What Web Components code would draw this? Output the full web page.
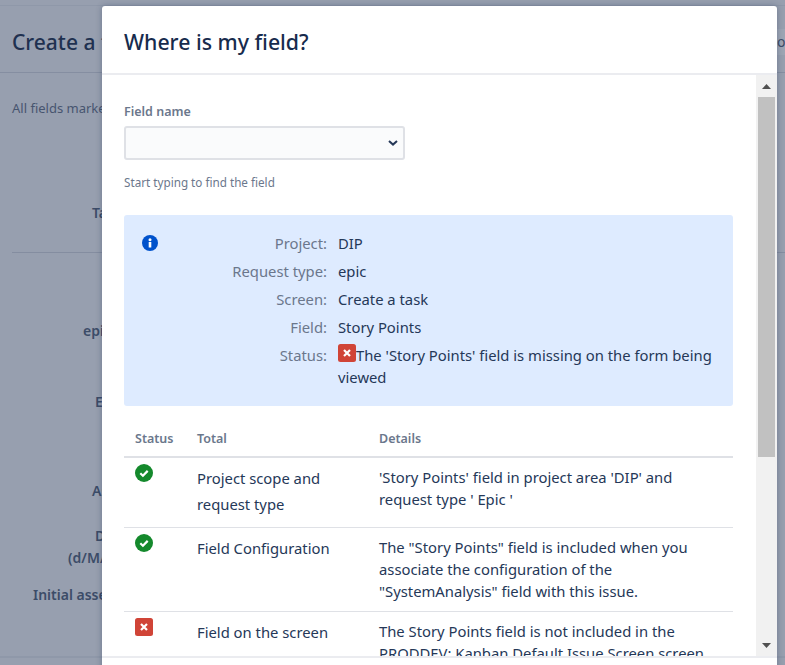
<!DOCTYPE html>
<html lang="en">
<head>
<meta charset="utf-8">
<title>Where is my field?</title>
<style>
  html, body { margin: 0; height: 665px; overflow: hidden; }
  body { font-family: "Noto Sans", "Open Sans", "Liberation Sans", sans-serif; color: #172b4d; }
</style>
</head>
<body>
<form-page>
  <field-modal heading="Where is my field?">
    <field-picker label="Field name" hint="Start typing to find the field"></field-picker>
    <info-panel>
      <info-row label="Project:">DIP</info-row>
      <info-row label="Request type:">epic</info-row>
      <info-row label="Screen:">Create a task</info-row>
      <info-row label="Field:">Story Points</info-row>
      <info-row label="Status:"><status-icon type="error"></status-icon>The 'Story Points' field is missing on the form being viewed</info-row>
    </info-panel>
    <check-table>
      <check-row type="ok" total="Project scope and request type">'Story Points' field in project area 'DIP' and request type ' Epic '</check-row>
      <check-row type="ok" total="Field Configuration">The "Story Points" field is included when you associate the configuration of the "SystemAnalysis" field with this issue.</check-row>
      <check-row type="error" total="Field on the screen">The Story Points field is not included in the PRODDEV: Kanban Default Issue Screen screen.</check-row>
    </check-table>
  </field-modal>
</form-page>

<script>
/* the form behind the dialog, dimmed by the backdrop */
class FormPage extends HTMLElement {
  constructor() {
    super();
    this.attachShadow({ mode: "open" });
    const labels = [
      ["Task", 92, 203], ["epic name", 83, 321], ["Epic", 95, 392], ["Assignee", 92, 481],
      ["Due date", 95, 526], ["(d/M/yy)", 68, 548], ["Initial assessment", 33, 585],
    ];
    this.shadowRoot.innerHTML = /* html */ `
    <style>
      :host { display: block; position: relative; width: 785px; height: 665px; overflow: hidden; background: #979faf; }
      .head { height: 68px; margin-top: 5px; border-top: 1px solid #8f98a9; border-bottom: 1px solid #858ea1; display: flex; justify-content: space-between; align-items: center; padding-left: 12px; padding-top: 6px; box-sizing: border-box; }
      h1 { margin: 0; font-size: 21px; font-weight: 500; color: #1f3150; white-space: nowrap; }
      .other { background: #9da5b4; color: #3c4c68; font-size: 14px; height: 26px; line-height: 26px; width: 8px; overflow: hidden; }
      .note { position: absolute; left: 12px; top: 99px; font-size: 13px; color: #47556f; white-space: nowrap; }
      .labels b { position: absolute; font-size: 14px; font-weight: 600; color: #3c4c68; white-space: nowrap; }
      .rule { position: absolute; left: 12px; right: 0; top: 252px; border-top: 1px solid #848da0; }
      .foot { position: absolute; left: 0; right: 0; top: 656px; border-top: 2px solid #8f98a9; }
    </style>
    <div class="head"><h1>Create a task</h1><span class="other">or</span></div>
    <div class="note">All fields marked with an asterisk are required</div>
    <div class="labels">${labels.map(([t, x, y]) => `<b style="left:${x}px;top:${y}px">${t}</b>`).join("")}</div>
    <div class="rule"></div>
    <div class="foot"></div>
    <slot></slot>`;
  }
}

class FieldModal extends HTMLElement {
  constructor() {
    super();
    this.attachShadow({ mode: "open" });
    this.shadowRoot.innerHTML = /* html */ `
    <style>
      :host { display: flex; flex-direction: column; position: absolute; left: 102px; top: 6px; width: 675px; height: 670px; background: #fff; border-radius: 3px 3px 0 0; box-shadow: 0 0 6px rgba(9,30,66,.3); }
      header { flex: none; box-sizing: border-box; height: 69px; display: flex; align-items: center; padding: 4px 0 0 22px; border-bottom: 2px solid #ebecf0; }
      h2 { margin: 0; font-size: 21.3px; font-weight: 500; color: #172b4d; }
      .middle { flex: none; display: flex; height: 581px; }
      .scroll { flex: 1; min-width: 0; overflow: hidden; padding: 29px 23px 0 22px; }
      .bar { flex: none; width: 21px; background: #f1f1f1; display: flex; flex-direction: column; align-items: center; }
      .arrow { flex: none; height: 22px; display: flex; align-items: center; justify-content: center; }
      .thumb { flex: none; width: 17px; height: 360px; background: #c1c1c1; }
      .gap { flex: 1; }
      footer { flex: none; height: 20px; border-top: 2px solid #ebecf0; }
    </style>
    <header><h2></h2></header>
    <div class="middle">
      <div class="scroll"><slot></slot></div>
      <div class="bar">
        <div class="arrow"><svg width="9" height="5" viewBox="0 0 9 5"><path d="M4.500 0 9 5H0z" fill="#505050"/></svg></div>
        <div class="thumb"></div>
        <div class="gap"></div>
        <div class="arrow"><svg width="9" height="5" viewBox="0 0 9 5"><path d="M0 0h9L4.500 5z" fill="#505050"/></svg></div>
      </div>
    </div>
    <footer></footer>`;
    this.shadowRoot.querySelector("h2").textContent = this.getAttribute("heading");
  }
}

class FieldPicker extends HTMLElement {
  constructor() {
    super();
    this.attachShadow({ mode: "open" });
    this.shadowRoot.innerHTML = /* html */ `
    <style>
      :host { display: block; }
      label { display: block; font-size: 12.5px; font-weight: 600; line-height: 16px; color: #6b778c; margin-bottom: 6px; }
      .box { box-sizing: border-box; width: 281px; height: 34px; background: #fafbfc; border: 2px solid #dfe1e6; border-radius: 3px; display: flex; align-items: center; justify-content: flex-end; padding-right: 5px; }
      p { margin: 14px 0 0; font-size: 11.7px; line-height: 16px; color: #6b778c; }
    </style>
    <label></label>
    <div class="box"><svg width="10" height="6" viewBox="0 0 10 6"><path d="M1 1l4 3.600L9 1" fill="none" stroke="#253858" stroke-width="2"/></svg></div>
    <p></p>`;
    this.shadowRoot.querySelector("label").textContent = this.getAttribute("label");
    this.shadowRoot.querySelector("p").textContent = this.getAttribute("hint");
  }
}

class InfoPanel extends HTMLElement {
  constructor() {
    super();
    this.attachShadow({ mode: "open" });
    this.shadowRoot.innerHTML = /* html */ `
    <style>
      :host { display: flex; box-sizing: border-box; height: 191px; margin-top: 25px; background: #deebff; border-radius: 3px; padding: 15px 21px 0 18px; }
      svg { flex: none; margin-top: 5px; }
      .rows { flex: 1; min-width: 0; }
    </style>
    <svg width="16" height="16" viewBox="0 0 16 16"><circle cx="8" cy="8" r="8" fill="#0052cc"/><rect x="6.700" y="7" width="2.600" height="5.500" fill="#fff"/><circle cx="8" cy="4.700" r="1.500" fill="#fff"/></svg>
    <div class="rows"><slot></slot></div>`;
  }
}

class InfoRow extends HTMLElement {
  constructor() {
    super();
    this.attachShadow({ mode: "open" });
    this.shadowRoot.innerHTML = /* html */ `
    <style>
      :host { display: grid; grid-template-columns: 169px 1fr; column-gap: 11px; min-height: 28px; font-size: 14.8px; line-height: 22px; padding-top: 2px; box-sizing: border-box; }
      .label { text-align: right; color: #6b778c; }
      .value { color: #253858; }
    </style>
    <div class="label"></div>
    <div class="value"><slot></slot></div>`;
    this.shadowRoot.querySelector(".label").textContent = this.getAttribute("label");
  }
}

class StatusIcon extends HTMLElement {
  constructor() {
    super();
    this.attachShadow({ mode: "open" });
  }

  connectedCallback() {
    const ok = this.getAttribute("type") === "ok";
    this.shadowRoot.innerHTML = /* html */ `
    <style>
      :host { display: inline-block; width: 18px; height: 18px; vertical-align: -1px; line-height: 0; margin-top: -2px; }
    </style>
    ${ok
      ? `<svg width="18" height="18" viewBox="0 0 18 18"><circle cx="9" cy="9" r="9" fill="#14892c"/><path d="M5.300 9.300l2.600 2.400 4.800-4.800" fill="none" stroke="#fff" stroke-width="2.200"/></svg>`
      : `<svg width="18" height="18" viewBox="0 0 18 18"><rect width="18" height="18" rx="2.500" fill="#d04437"/><path d="M6 6l6 6M12 6l-6 6" fill="none" stroke="#fff" stroke-width="2.200"/></svg>`}`;
  }
}

class CheckTable extends HTMLElement {
  constructor() {
    super();
    this.attachShadow({ mode: "open" });
    this.shadowRoot.innerHTML = /* html */ `
    <style>
      :host { display: block; margin-top: 22px; }
      .head { display: grid; grid-template-columns: 62px 182px 1fr; height: 28px; border-bottom: 2px solid #dfe1e6; font-size: 12.5px; font-weight: 600; color: #6b778c; line-height: 22px; }
      .head span { padding-left: 11px; }
    </style>
    <div class="head"><span>Status</span><span>Total</span><span>Details</span></div>
    <slot></slot>`;
  }
}

class CheckRow extends HTMLElement {
  constructor() {
    super();
    this.attachShadow({ mode: "open" });
    this.shadowRoot.innerHTML = /* html */ `
    <style>
      :host { display: grid; grid-template-columns: 62px 182px 1fr; border-bottom: 1px solid #dfe1e6; font-size: 14.8px; color: #253858; }
      .icon { padding: 8px 0 0 11px; line-height: 0; }
      .total { padding: 7px 11px 10px; line-height: 26px; }
      .details { padding: 8px 11px 9px; line-height: 22px; }
    </style>
    <div class="icon"><status-icon type="${this.getAttribute("type")}"></status-icon></div>
    <div class="total"></div>
    <div class="details"><slot></slot></div>`;
    this.shadowRoot.querySelector(".total").textContent = this.getAttribute("total");
  }
}

customElements.define("status-icon", StatusIcon);
customElements.define("form-page", FormPage);
customElements.define("field-modal", FieldModal);
customElements.define("field-picker", FieldPicker);
customElements.define("info-panel", InfoPanel);
customElements.define("info-row", InfoRow);
customElements.define("check-table", CheckTable);
customElements.define("check-row", CheckRow);
</script>
</body>
</html>
